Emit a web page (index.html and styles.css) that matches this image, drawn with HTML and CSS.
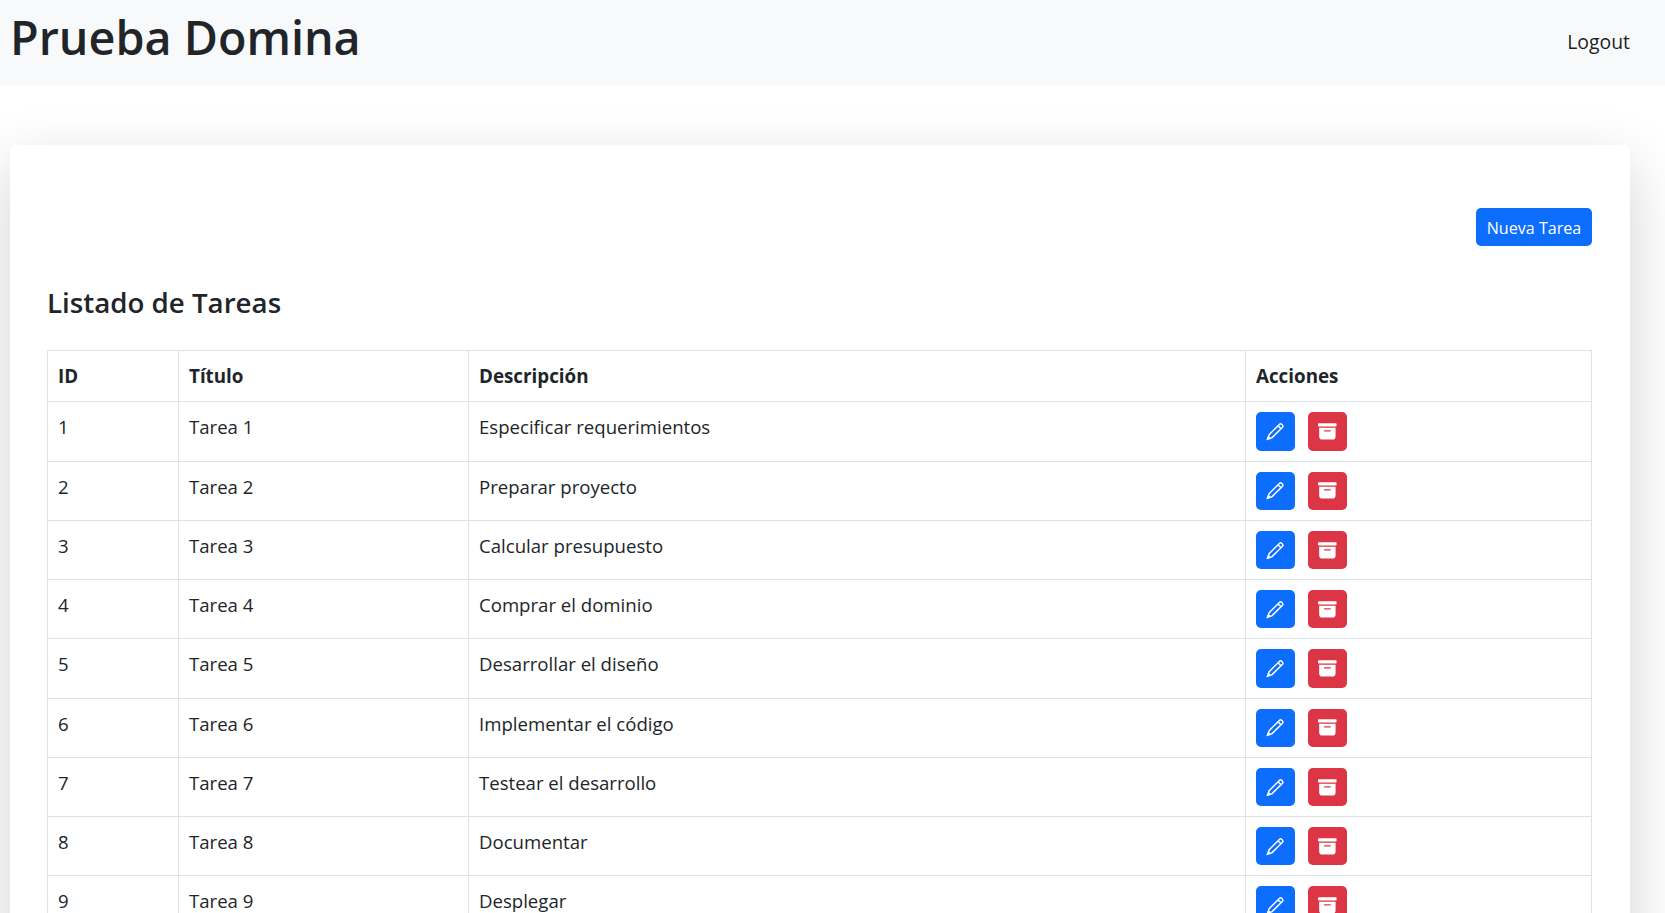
FILE: index.html
```html
<!DOCTYPE html>
<html>
<head>
	<title>Prueba Domina</title>
	<link rel="stylesheet" href="styles.css">
</head>
<body>

	<svg class="sprites">
		<symbol id="i-pencil" viewBox="0 0 16 16">
			<path class="line" d="M1.2 14.8 2.7 10.8 11.6 1.9A1.2 1.2 0 0 1 13.3 1.9L14.1 2.7A1.2 1.2 0 0 1 14.1 4.4L5.2 13.3Z"/>
			<path class="line" d="M10.3 3.2 12.8 5.7"/>
			<path d="M1 15 1.9 11.6 4.4 14.1Z"/>
		</symbol>
		<symbol id="i-archive" viewBox="0 0 16 16">
			<path d="M12.643 15C13.979 15 15 13.845 15 12.5V5H1v7.5C1 13.845 2.021 15 3.357 15h9.286zM5.5 7h5a.5.5 0 0 1 0 1h-5a.5.5 0 0 1 0-1zM.8 1a.8.8 0 0 0-.8.8V3a.8.8 0 0 0 .8.8h14.4A.8.8 0 0 0 16 3V1.8a.8.8 0 0 0-.8-.8H.8z"/>
		</symbol>
	</svg>

	<nav class="navbar">
		<h1 class="brand">Prueba Domina</h1>
		<a class="nav-link" href="#">Logout</a>
	</nav>

	<div class="card">
		<div class="card-top">
			<a class="btn btn-primary" href="#">Nueva Tarea</a>
		</div>
		<h4 class="card-title">Listado de Tareas</h4>
		<table class="table">
			<colgroup>
				<col class="col-id">
				<col class="col-title">
				<col class="col-desc">
				<col class="col-actions">
			</colgroup>
			<thead>
				<tr><th>ID</th><th>Título</th><th>Descripción</th><th>Acciones</th></tr>
			</thead>
			<tbody>
				<tr>
					<td>1</td><td>Tarea 1</td><td>Especificar requerimientos</td>
					<td><div class="actions">
						<a class="btn btn-primary btn-icon" href="#"><svg class="icon"><use href="#i-pencil"/></svg></a>
						<a class="btn btn-danger btn-icon" href="#"><svg class="icon"><use href="#i-archive"/></svg></a>
					</div></td>
				</tr>
				<tr>
					<td>2</td><td>Tarea 2</td><td>Preparar proyecto</td>
					<td><div class="actions">
						<a class="btn btn-primary btn-icon" href="#"><svg class="icon"><use href="#i-pencil"/></svg></a>
						<a class="btn btn-danger btn-icon" href="#"><svg class="icon"><use href="#i-archive"/></svg></a>
					</div></td>
				</tr>
				<tr>
					<td>3</td><td>Tarea 3</td><td>Calcular presupuesto</td>
					<td><div class="actions">
						<a class="btn btn-primary btn-icon" href="#"><svg class="icon"><use href="#i-pencil"/></svg></a>
						<a class="btn btn-danger btn-icon" href="#"><svg class="icon"><use href="#i-archive"/></svg></a>
					</div></td>
				</tr>
				<tr>
					<td>4</td><td>Tarea 4</td><td>Comprar el dominio</td>
					<td><div class="actions">
						<a class="btn btn-primary btn-icon" href="#"><svg class="icon"><use href="#i-pencil"/></svg></a>
						<a class="btn btn-danger btn-icon" href="#"><svg class="icon"><use href="#i-archive"/></svg></a>
					</div></td>
				</tr>
				<tr>
					<td>5</td><td>Tarea 5</td><td>Desarrollar el diseño</td>
					<td><div class="actions">
						<a class="btn btn-primary btn-icon" href="#"><svg class="icon"><use href="#i-pencil"/></svg></a>
						<a class="btn btn-danger btn-icon" href="#"><svg class="icon"><use href="#i-archive"/></svg></a>
					</div></td>
				</tr>
				<tr>
					<td>6</td><td>Tarea 6</td><td>Implementar el código</td>
					<td><div class="actions">
						<a class="btn btn-primary btn-icon" href="#"><svg class="icon"><use href="#i-pencil"/></svg></a>
						<a class="btn btn-danger btn-icon" href="#"><svg class="icon"><use href="#i-archive"/></svg></a>
					</div></td>
				</tr>
				<tr>
					<td>7</td><td>Tarea 7</td><td>Testear el desarrollo</td>
					<td><div class="actions">
						<a class="btn btn-primary btn-icon" href="#"><svg class="icon"><use href="#i-pencil"/></svg></a>
						<a class="btn btn-danger btn-icon" href="#"><svg class="icon"><use href="#i-archive"/></svg></a>
					</div></td>
				</tr>
				<tr>
					<td>8</td><td>Tarea 8</td><td>Documentar</td>
					<td><div class="actions">
						<a class="btn btn-primary btn-icon" href="#"><svg class="icon"><use href="#i-pencil"/></svg></a>
						<a class="btn btn-danger btn-icon" href="#"><svg class="icon"><use href="#i-archive"/></svg></a>
					</div></td>
				</tr>
				<tr>
					<td>9</td><td>Tarea 9</td><td>Desplegar</td>
					<td><div class="actions">
						<a class="btn btn-primary btn-icon" href="#"><svg class="icon"><use href="#i-pencil"/></svg></a>
						<a class="btn btn-danger btn-icon" href="#"><svg class="icon"><use href="#i-archive"/></svg></a>
					</div></td>
				</tr>
			</tbody>
		</table>
	</div>

</body>
</html>
```

FILE: styles.css
```css
html {
	font-size: 20px;
}
body {
	margin: 0;
	font-family: "Open Sans", "Noto Sans", sans-serif;
	font-size: 18.6px;
	line-height: 30px;
	color: #212529;
	background-color: #fff;
}
.sprites {
	display: none;
}
.navbar {
	display: flex;
	justify-content: space-between;
	align-items: center;
	height: 85px;
	padding: 0 35px 0 10px;
	box-sizing: border-box;
	background-color: #f8f9fa;
}
.brand {
	margin: 0 0 10px;
	font-size: 46.7px;
	font-weight: 600;
	line-height: 1.2;
}
.nav-link {
	font-size: 19.4px;
	color: rgba(0, 0, 0, .9);
	text-decoration: none;
	margin-top: -2px;
}
.card {
	margin: 60px 35px 0 10px;
	padding: 63px 38px 40px 37px;
	background-color: #fff;
	border-radius: 6px;
	box-shadow: 0 20px 60px rgba(0, 0, 0, .175);
}
.card-top {
	display: flex;
	justify-content: flex-end;
	margin-bottom: 38px;
}
.card-title {
	margin: 0 0 30px;
	font-size: 27.7px;
	font-weight: 600;
	line-height: 36px;
}
.btn {
	display: inline-flex;
	align-items: center;
	justify-content: center;
	box-sizing: border-box;
	height: 38.25px;
	width: 116px;
	padding-top: 1px;
	border-radius: 5px;
	font-size: 16.1px;
	color: #fff;
	text-decoration: none;
}
.btn-primary {
	background-color: #0d6efd;
}
.btn-danger {
	background-color: #dc3545;
}
.btn-icon {
	width: 39px;
	padding: 0;
}
.icon {
	width: 18.75px;
	height: 18.75px;
	fill: currentColor;
}
.line {
	fill: none;
	stroke: currentColor;
	stroke-width: 1.25;
}
.actions {
	display: flex;
	gap: 13px;
}
.table {
	width: 100%;
	table-layout: fixed;
	border-collapse: collapse;
}
.table th,
.table td {
	padding: 10px;
	border: 1px solid #dee2e6;
	text-align: left;
	vertical-align: top;
}
.table th {
	font-size: 18.8px;
	font-weight: 700;
}
.col-id {
	width: 131px;
}
.col-title {
	width: 290px;
}
.col-desc {
	width: 777px;
}
```
